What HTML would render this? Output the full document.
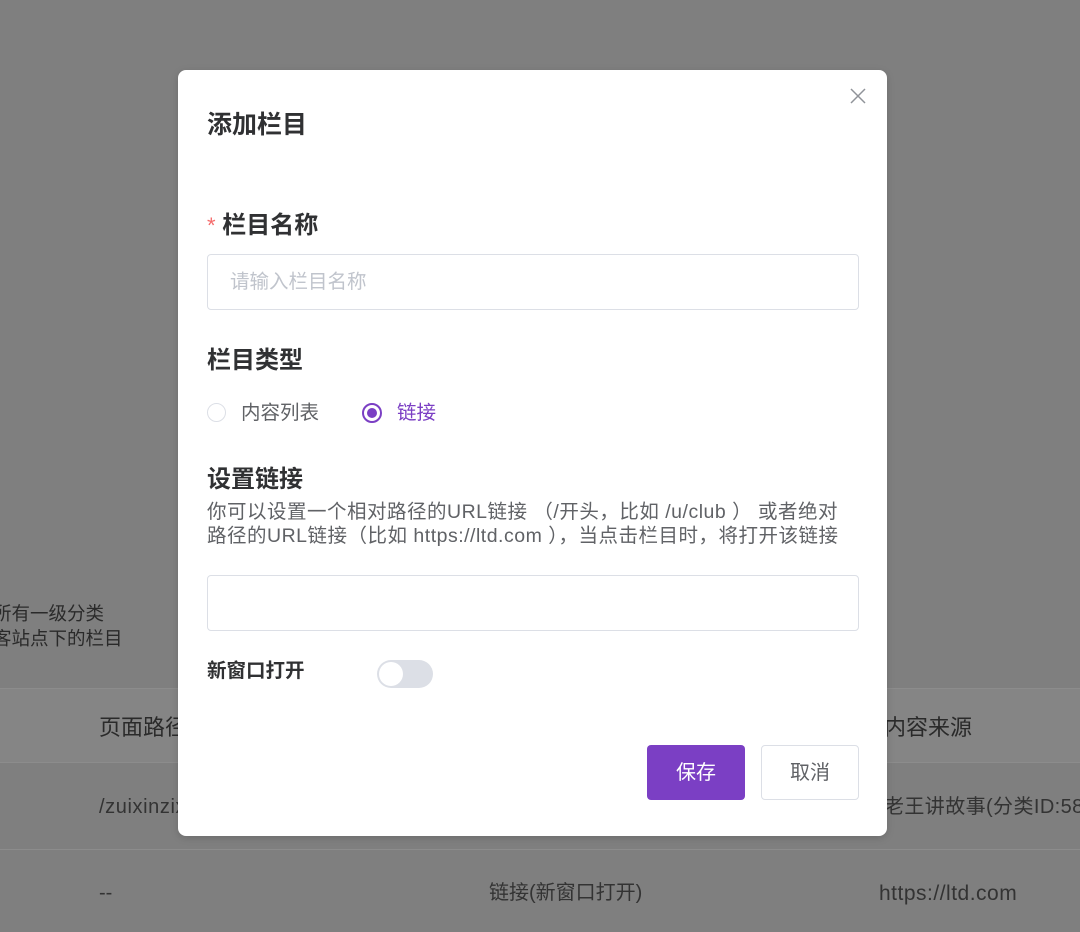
<!DOCTYPE html>
<html><head><meta charset="utf-8"><style>
*{margin:0;padding:0;box-sizing:border-box}
body{width:1080px;height:932px;background:#7f7f7f;position:relative;overflow:hidden;font-family:"Liberation Sans","Noto Sans CJK SC",sans-serif;color:#1f1f1f}
.a{position:absolute;white-space:nowrap;line-height:1}
.bg{color:#2a2a2a}
.m{position:absolute;left:178px;top:70px;width:709px;height:766px;background:#fff;border-radius:8px;box-shadow:0 2px 8px rgba(0,0,0,.15)}
.lab{font-weight:bold;color:#303133}
.inp{position:absolute;left:29px;width:652px;height:56px;border:1px solid #dcdfe6;border-radius:4px}
</style></head><body>
<div class="a bg" style="left:-7px;top:605px;font-size:18.5px">所有一级分类</div>
<div class="a bg" style="left:-7px;top:630px;font-size:18.5px">客站点下的栏目</div>
<div style="position:absolute;left:0;top:688px;width:1080px;height:75px;background:#858585;border-top:1px solid #8c8c8c;border-bottom:1px solid #8c8c8c"></div>
<div style="position:absolute;left:0;top:849px;width:1080px;height:1px;background:#8c8c8c"></div>
<div class="a bg" style="left:99px;top:717px;font-size:22px">页面路径</div>
<div class="a bg" style="left:884px;top:717px;font-size:22px">内容来源</div>
<div class="a bg" style="left:99px;top:797px;font-size:20px;color:#333;letter-spacing:.6px">/zuixinzixun</div>
<div class="a bg" style="left:884px;top:797px;font-size:20px;color:#333;letter-spacing:.4px">老王讲故事(分类ID:583)</div>
<div class="a bg" style="left:99px;top:883px;font-size:20px;color:#333">--</div>
<div class="a bg" style="left:489px;top:883px;font-size:20px;color:#333">链接(新窗口打开)</div>
<div class="a bg" style="left:879px;top:883px;font-size:21px;color:#333;letter-spacing:.5px">https://ltd.com</div>

<div class="m">
<svg style="position:absolute;left:672px;top:18px" width="16" height="16" viewBox="0 0 16 16"><path d="M1 1L15 15M15 1L1 15" stroke="#909399" stroke-width="1.5"/></svg>
<div class="a lab" style="left:29px;top:43px;font-size:25px">添加栏目</div>
<div class="a lab" style="left:29px;top:144px;font-size:24px"><span style="color:#f56c6c;font-weight:normal;font-size:22px">*</span> 栏目名称</div>
<div class="inp" style="top:184px"><div class="a" style="left:22px;top:18px;font-size:19.5px;color:#c0c4cc">请输入栏目名称</div></div>
<div class="a lab" style="left:29px;top:279px;font-size:24px">栏目类型</div>
<div style="position:absolute;left:29px;top:333px;width:19px;height:19px;border:1px solid #dcdfe6;border-radius:50%"></div>
<div class="a" style="left:63px;top:334px;font-size:19.5px;color:#606266">内容列表</div>
<div style="position:absolute;left:184px;top:333px;width:20px;height:20px;border:2px solid #7b3fc4;border-radius:50%"><div style="position:absolute;left:3px;top:3px;width:10px;height:10px;background:#7b3fc4;border-radius:50%"></div></div>
<div class="a" style="left:219px;top:334px;font-size:19.5px;color:#7b3fc4">链接</div>
<div class="a lab" style="left:29px;top:398px;font-size:24px">设置链接</div>
<div class="a" style="left:29px;top:430px;font-size:19.5px;color:#606266;line-height:24px;letter-spacing:.5px">你可以设置一个相对路径的URL链接 （/开头，比如 /u/club ） 或者绝对<br>路径的URL链接（比如 https://ltd.com ），当点击栏目时，将打开该链接</div>
<div class="inp" style="top:505px"></div>
<div class="a lab" style="left:29px;top:592px;font-size:19.5px">新窗口打开</div>
<div style="position:absolute;left:199px;top:590px;width:56px;height:28px;background:#dcdfe6;border-radius:14px"><div style="position:absolute;left:2px;top:2px;width:24px;height:24px;background:#fff;border-radius:50%"></div></div>
<div style="position:absolute;left:469px;top:675px;width:98px;height:55px;background:#7b3fc4;border-radius:4px;color:#fff;font-size:20px;text-align:center;line-height:57px">保存</div>
<div style="position:absolute;left:583px;top:675px;width:98px;height:55px;border:1px solid #dcdfe6;border-radius:4px;color:#606266;font-size:20px;text-align:center;line-height:55px">取消</div>
</div>
</body></html>
